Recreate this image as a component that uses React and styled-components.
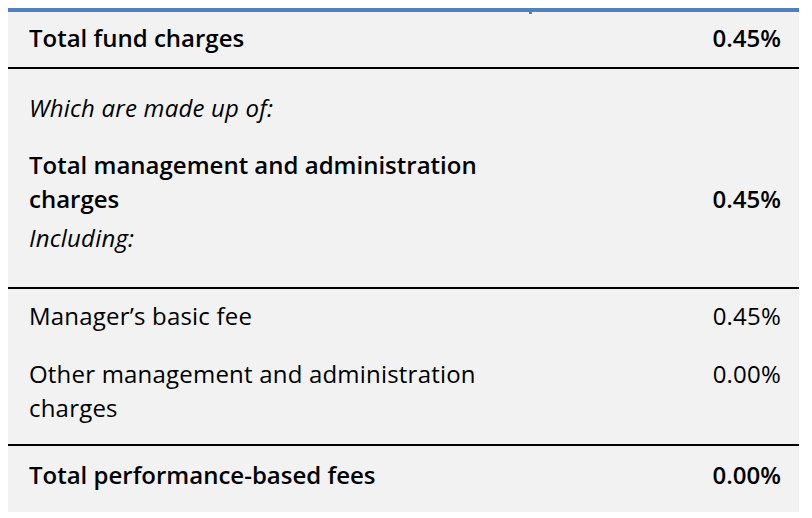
import React from 'react';
import styled, { createGlobalStyle } from 'styled-components';

const GlobalStyle = createGlobalStyle`
  body {
    margin: 8px;
    background: #ffffff;
    font-family: "Open Sans", "Liberation Sans", sans-serif;
    color: #000000;
  }
`;

const Panel = styled.div`
  position: relative;
  width: 791px;
  background: #f2f2f2;
  border-top: 4px solid #4f81bd;

  &::after {
    content: '';
    position: absolute;
    top: 0;
    left: 521px;
    width: 3px;
    height: 2px;
    background: #4f81bd;
  }
`;

const Section = styled.div`
  display: flex;
  flex-direction: column;
  padding: ${(p) => p.$pad};
  border-bottom: ${(p) => (p.$last ? 'none' : '2px solid #000')};
`;

const Row = styled.div`
  display: flex;
  justify-content: space-between;
  align-items: ${(p) => (p.$bottom ? 'flex-end' : 'flex-start')};
  margin-top: ${(p) => p.$top || 0}px;
  padding: 0 18px 0 21px;
  font-size: 24px;
  line-height: 34px;
  font-weight: ${(p) => (p.$strong ? 600 : 400)};
  font-style: ${(p) => (p.$italic ? 'italic' : 'normal')};
  letter-spacing: ${(p) => (p.$strong ? '0' : '0.2px')};
`;

const Label = styled.div`
  width: 480px;
`;

const Value = styled.div`
  text-align: right;
`;

export default function App() {
  return (
    <>
      <GlobalStyle />
      <Panel>
        <Section $pad="9px 0 12px">
          <Row $strong>
            <Label>Total fund charges</Label>
            <Value>0.45%</Value>
          </Row>
        </Section>

        <Section $pad="22px 0 32px">
          <Row $italic>
            <Label>Which are made up of:</Label>
          </Row>
          <Row $strong $bottom $top={23}>
            <Label>Total management and administration charges</Label>
            <Value>0.45%</Value>
          </Row>
          <Row $italic $top={5}>
            <Label>Including:</Label>
          </Row>
        </Section>

        <Section $pad="10px 0 19px">
          <Row>
            <Label>Manager’s basic fee</Label>
            <Value>0.45%</Value>
          </Row>
          <Row $top={24}>
            <Label>Other management and administration charges</Label>
            <Value>0.00%</Value>
          </Row>
        </Section>

        <Section $pad="12px 0 20px" $last>
          <Row $strong>
            <Label>Total performance-based fees</Label>
            <Value>0.00%</Value>
          </Row>
        </Section>
      </Panel>
    </>
  );
}
